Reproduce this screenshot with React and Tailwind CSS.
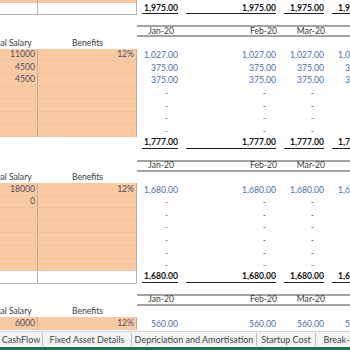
import React from "react";

// colonnes (A est coupée à gauche par le défilement de la feuille)
const colA = "w-[64px] shrink-0";
const colB = "w-[99px] shrink-0";
const colC = "w-[44px] shrink-0";
const colD = "w-[98px] shrink-0";
const colE = "w-[48px] shrink-0";
const colF = "w-[48px] shrink-0";
const valCols = [colC, colD, colE, colF];

const cell = "flex items-end leading-none pb-[1.5px] whitespace-nowrap";

function OrangeCells({ a, b, top }) {
  return (
    <>
      <div className={`${colA} ${cell} justify-end pr-[2px] bg-[#f9c9a2] border-r border-b border-r-[#c2aa98] border-b-[#e9c3a6] text-[#4f4a66]`}>
        {top ? "" : a}
      </div>
      <div className={`${colB} ${cell} justify-end pr-[2px] bg-[#f9c9a2] border-r border-b border-r-[#c2aa98] border-b-[#e9c3a6] text-[#4f4a66]`}>
        {top ? "" : b}
      </div>
    </>
  );
}

function Values({ vals }) {
  return valCols.map((c, i) =>
    vals ? (
      <div key={i} className={`${c} ${cell} justify-end pr-[3px] text-[#4a6cb0]`}>
        {vals}
      </div>
    ) : (
      <div key={i} className={`${c} ${cell} justify-end pr-[13px] text-[#4a6cb0]`}>
        -
      </div>
    )
  );
}

function DataRow({ a, b, vals }) {
  return (
    <div className="flex h-[12.6px]">
      <OrangeCells a={a} b={b} />
      <Values vals={vals} />
    </div>
  );
}

function TotalRow({ total, boxed }) {
  return (
    <div className="flex h-[12.6px]">
      <div className={`${colA} ${boxed ? "border-r border-b border-[#b4b4b4]" : ""}`} />
      <div className={`${colB} ${boxed ? "border-r border-b border-[#b4b4b4]" : ""}`} />
      {valCols.map((c, i) => (
        <div key={i} className={`${c} flex items-end leading-none whitespace-nowrap pb-[1px]`}>
          <div className="flex-1 ml-[5px] mr-[3px] text-right font-bold text-[#111] border-b border-[#222] pb-[1px]">
            {total}
          </div>
        </div>
      ))}
    </div>
  );
}

function HeaderRows() {
  return (
    <>
      <div className="h-[10px]" />
      <div className="flex h-[12px]">
        <div className={colA} />
        <div className={colB} />
        <div className="flex flex-1 border-y-2 border-[#a3a3a3]">
          <div className={`${colC} flex items-center leading-none whitespace-nowrap justify-end pr-[7px] text-[#3a3a3a]`}>Jan-20</div>
          <div className={`${colD} flex items-center leading-none whitespace-nowrap justify-end pr-[2px] text-[#3a3a3a]`}>Feb-20</div>
          <div className={`${colE} flex items-center leading-none whitespace-nowrap justify-end pr-[2px] text-[#3a3a3a]`}>Mar-20</div>
          <div className={colF} />
        </div>
      </div>
      <div className="flex h-[11.5px]">
        <div className={`${colA} ${cell} justify-center text-[#3a3a3a]`}>Annual Salary</div>
        <div className={`${colB} ${cell} justify-center text-[#3a3a3a]`}>Benefits</div>
      </div>
    </>
  );
}

const section1 = [
  { a: "11000", b: "12%", vals: "1,027.00" },
  { a: "4500", vals: "375.00" },
  { a: "4500", vals: "375.00" },
  {}, {}, {}, {},
];

const section2 = [
  { a: "18000", b: "12%", vals: "1,680.00" },
  { a: "0" },
  {}, {}, {}, {}, {},
];

const tabs = [
  { t: "CashFlow", w: "w-[43px]" },
  { t: "Fixed Asset Details", w: "w-[89px]" },
  { t: "Depriciation and Amortisation", w: "w-[125px]" },
  { t: "Startup Cost", w: "w-[59px]" },
  { t: "Break-Even", w: "w-[60px]" },
];

export default function App() {
  return (
    <div className="w-[350px] h-[350px] overflow-hidden bg-white flex flex-col font-['Lato',sans-serif] text-[8.6px]">
      <div className="flex-1 overflow-hidden">
        <div className="-ml-[26px] w-[401px]">
          {/* fin de la section précédente */}
          <div className="flex h-[2.7px] overflow-hidden">
            <OrangeCells top />
          </div>
          <TotalRow total="1,975.00" boxed />

          <HeaderRows />
          {section1.map((r, i) => (
            <DataRow key={i} {...r} />
          ))}
          <TotalRow total="1,777.00" />

          <HeaderRows />
          {section2.map((r, i) => (
            <DataRow key={i} {...r} />
          ))}
          <TotalRow total="1,680.00" boxed />

          <HeaderRows />
          <DataRow a="6000" b="12%" vals="560.00" />
        </div>
      </div>

      {/* onglets du classeur */}
      <div className="h-[19px] shrink-0 flex flex-col bg-[#f3f3f3] border-t border-[#d4d4d4]">
        <div className="flex-1 flex items-center font-['Lato',sans-serif] text-[9px] text-[#444] whitespace-nowrap">
          {tabs.map((tab, i) => (
            <div key={tab.t} className={`${tab.w} shrink-0 text-center ${i < tabs.length - 1 ? "border-r border-[#bcbcbc]" : ""}`}>
              {tab.t}
            </div>
          ))}
        </div>
        <div className="h-[3px] bg-[#217346]" />
      </div>
    </div>
  );
}
